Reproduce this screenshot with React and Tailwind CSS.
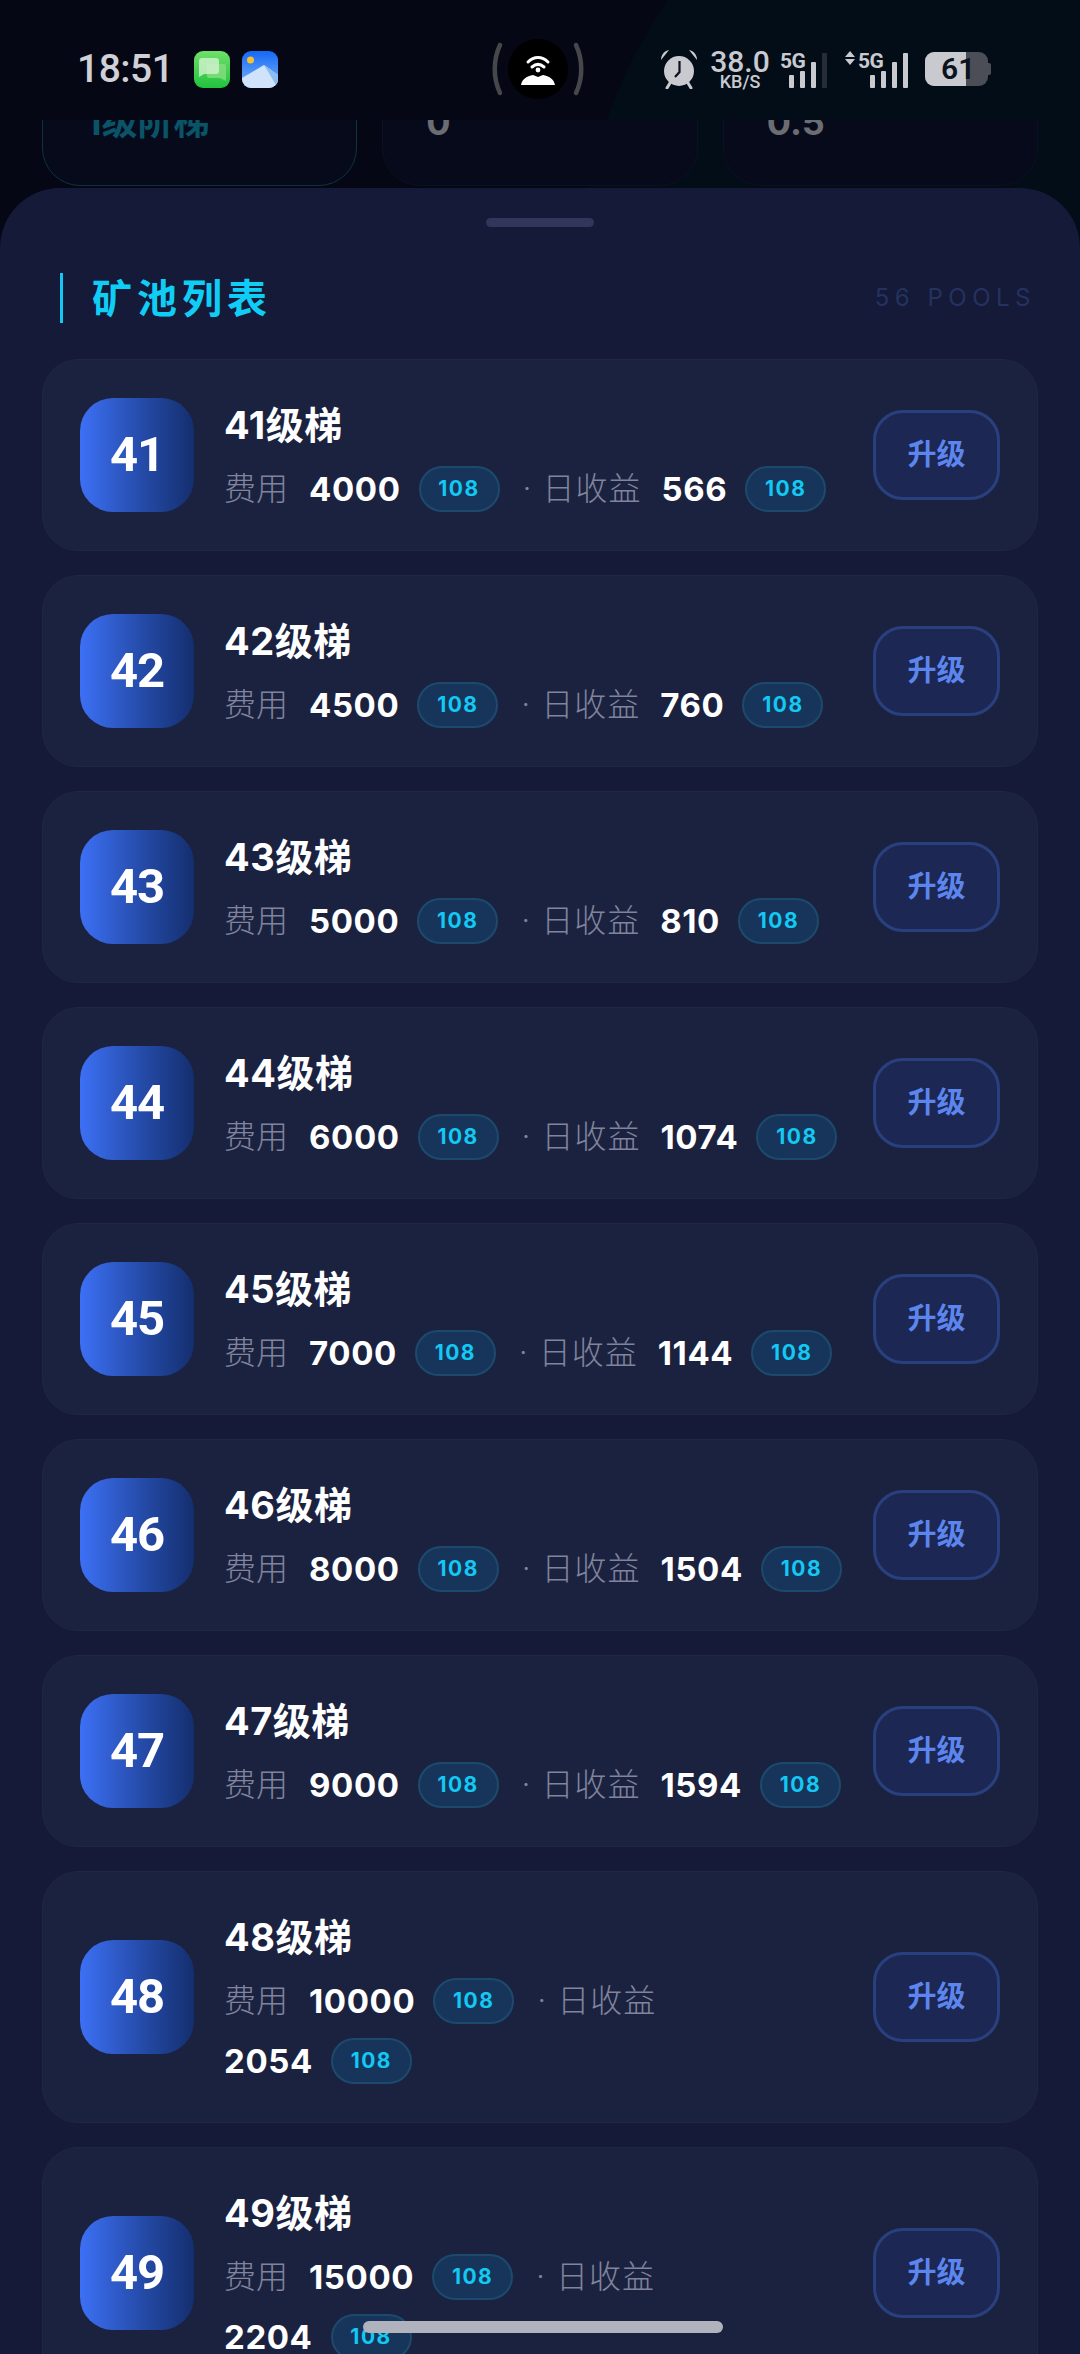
const FONT = { fontFamily: 'Inter, "Noto Sans CJK SC", sans-serif' };

const pools = [
  { level: 41, cost: 4000, daily: 566 },
  { level: 42, cost: 4500, daily: 760 },
  { level: 43, cost: 5000, daily: 810 },
  { level: 44, cost: 6000, daily: 1074 },
  { level: 45, cost: 7000, daily: 1144 },
  { level: 46, cost: 8000, daily: 1504 },
  { level: 47, cost: 9000, daily: 1594 },
  { level: 48, cost: 10000, daily: 2054 },
  { level: 49, cost: 15000, daily: 2204 },
];

function Pill() {
  return (
    <span className="ml-[18px] flex h-[46px] w-[81px] items-center justify-center rounded-full border-2 border-[#1d4a6c] bg-[#17355a] font-['Inter'] text-[21px] font-bold tracking-[1.5px] text-[#13c8f2]">
      108
    </span>
  );
}

function Num({ children }) {
  return <span className="font-['Inter'] text-[33px] font-bold leading-[46px] tracking-[0.6px] text-white">{children}</span>;
}

function PoolRow({ level, cost, daily }) {
  return (
    <div className="flex items-center rounded-[36px] border border-[#1f2745] bg-[#1b2240] p-[37px]">
      <div className="flex h-[114px] w-[114px] shrink-0 items-center justify-center rounded-[33px] bg-gradient-to-r from-[#3c70f5] to-[#142f6f] font-['Roboto'] text-[49px] font-bold tracking-[-1px] text-white">
        {level}
      </div>
      <div className="ml-[30px] mr-[24px] min-w-0 flex-1">
        <div className="h-[56px] text-[38px] font-bold leading-[56px] tracking-[0.5px] text-white">{level}级梯</div>
        <div className="mb-[1px] mt-[13px] flex flex-wrap items-center gap-y-[14px]">
          <div className="flex items-center">
            <span className="mr-[21px] text-[32px] font-light leading-[46px] tracking-[0px] text-[#80849c]">费用</span>
            <Num>{cost}</Num>
            <Pill />
          </div>
          <div className="flex items-center">
            <span className="ml-[24px] mr-[12px] text-[24px] leading-[46px] text-[#80849c]">·</span>
            <span className="mr-[20px] text-[32px] font-light leading-[46px] tracking-[1px] text-[#80849c]">日收益</span>
          </div>
          <div className="flex items-center">
            <Num>{daily}</Num>
            <Pill />
          </div>
        </div>
      </div>
      <button className="flex h-[90px] w-[127px] shrink-0 items-center justify-center rounded-[30px] border-[3px] border-[#29407f] bg-[#1c2753] text-[29px] font-bold text-[#5c86ee]">
        升级
      </button>
    </div>
  );
}

function MessageIcon() {
  return (
    <svg width="36" height="37" viewBox="0 0 36 37">
      <defs>
        <linearGradient id="msg" x1="0" y1="0" x2="0" y2="1">
          <stop offset="0" stopColor="#6fe06a" />
          <stop offset="1" stopColor="#22c13f" />
        </linearGradient>
      </defs>
      <rect width="36" height="37" rx="9" fill="url(#msg)" />
      <path d="M13 13h17a2 2 0 0 1 2 2v15l-6-3H15a2 2 0 0 1-2-2z" fill="#86dd80" opacity="0.8" />
      <path d="M8 7h14a3 3 0 0 1 3 3v10a3 3 0 0 1-3 3H10l-5 3V10a3 3 0 0 1 3-3z" fill="#d3f2ce" opacity="0.8" />
    </svg>
  );
}

function GalleryIcon() {
  return (
    <svg width="36" height="37" viewBox="0 0 36 37">
      <defs>
        <linearGradient id="sky" x1="0" y1="0" x2="0" y2="1">
          <stop offset="0" stopColor="#1668f5" />
          <stop offset="1" stopColor="#7cb6f8" />
        </linearGradient>
      </defs>
      <rect width="36" height="37" rx="9" fill="url(#sky)" />
      <circle cx="8.5" cy="9" r="3.5" fill="#f6c32c" />
      <path d="M0 27 L22 14 L36 24 V28 a9 9 0 0 1 -9 9 H9 a9 9 0 0 1 -9 -9z" fill="#cfe4fb" />
      <path d="M22 14 L36 24 V28 a9 9 0 0 1 -2 6z" fill="#8fbdf0" />
    </svg>
  );
}

function HotspotPill() {
  return (
    <div className="flex items-center gap-[5px]">
      <svg width="12" height="54" viewBox="0 0 12 54" fill="none">
        <path d="M9 3C2 18 2 36 9 51" stroke="#46474b" strokeWidth="4.5" strokeLinecap="round" />
      </svg>
      <div className="flex h-[60px] w-[60px] items-center justify-center rounded-full bg-black">
        <svg width="36" height="34" viewBox="0 0 36 34" fill="none">
          <path d="M8 10c6-6 14-6 20 0" stroke="#fff" strokeWidth="3" strokeLinecap="round" />
          <path d="M12 15c4-3.5 8-3.5 12 0" stroke="#fff" strokeWidth="3" strokeLinecap="round" />
          <circle cx="18" cy="18" r="2.4" fill="#fff" />
          <path d="M13 23l5 2 5-2c6 1 11 4 12 10H1c1-6 6-9 12-10z" fill="#fff" />
        </svg>
      </div>
      <svg width="12" height="54" viewBox="0 0 12 54" fill="none">
        <path d="M3 3C10 18 10 36 3 51" stroke="#46474b" strokeWidth="4.5" strokeLinecap="round" />
      </svg>
    </div>
  );
}

function AlarmIcon() {
  return (
    <svg width="38" height="40" viewBox="0 0 38 40" fill="none">
      <circle cx="19" cy="22" r="15" fill="#c9cacf" />
      <path d="M1 11C1 6 4 2 9 1z" fill="#c9cacf" />
      <path d="M37 11c0-5-3-9-8-10z" fill="#c9cacf" />
      <path d="M10 34l-3 5M28 34l3 5" stroke="#c9cacf" strokeWidth="3" strokeLinecap="round" />
      <path d="M19.5 12v11l-4.5 5" stroke="#0a1220" strokeWidth="2.2" />
    </svg>
  );
}

function Bars({ lastDim }) {
  const heights = [13, 17, 26, 35];
  return (
    <div className="flex items-end gap-[6px]">
      {heights.map((h, i) => (
        <span
          key={i}
          className={`w-[5px] rounded-[1px] ${lastDim && i === 3 ? 'bg-[#262d38]' : 'bg-[#c9cacf]'}`}
          style={{ height: h }}
        />
      ))}
    </div>
  );
}

function StatusBar() {
  return (
    <div className="relative z-10 flex h-[120px] shrink-0 items-center pt-[18px]">
      <span className="ml-[77px] w-[92px] font-['Roboto'] text-[39px] font-medium leading-none tracking-[-0.5px] text-[#d0d1d6]">18:51</span>
      <div className="ml-[25px] flex items-center gap-[12px]">
        <MessageIcon />
        <GalleryIcon />
      </div>
      <div className="ml-[213px]">
        <HotspotPill />
      </div>
      <div className="ml-[75px] flex items-center">
        <AlarmIcon />
        <div className="ml-[13px] flex w-[58px] flex-col items-center text-[#c9cacf]">
          <span className="font-['Roboto'] text-[30px] font-medium leading-[24px]">38.0</span>
          <span className="font-['Roboto'] text-[18px] font-medium leading-[15px]">KB/S</span>
        </div>
        <div className="relative ml-[11px] h-[37px] w-[49px]">
          <span className="absolute left-0 top-0 font-['Roboto'] text-[21px] font-bold leading-[20px] tracking-[-0.5px] text-[#c9cacf]">5G</span>
          <div className="absolute bottom-0 right-[2px]"><Bars lastDim /></div>
        </div>
        <div className="relative ml-[16px] h-[37px] w-[63px]">
          <svg className="absolute left-0 top-0" width="10" height="14" viewBox="0 0 10 14">
            <path d="M5 0l5 6H0zM5 14l5-6H0z" fill="#c9cacf" />
          </svg>
          <span className="absolute left-[13px] top-0 font-['Roboto'] text-[21px] font-bold leading-[20px] tracking-[-0.5px] text-[#c9cacf]">5G</span>
          <div className="absolute bottom-0 right-0"><Bars /></div>
        </div>
        <div className="relative ml-[17px] flex h-[34px] w-[63px] items-center overflow-hidden rounded-[9px] bg-[#4b4e56]">
          <div className="h-full w-[41px] bg-[#c9cacf]" />
          <span className="absolute left-[16px] top-0 font-['Roboto'] text-[30px] font-semibold leading-[34px] text-[#0b1220]">61</span>
        </div>
        <div className="h-[12px] w-[3px] rounded-r-[2px] bg-[#4b4e56]" />
      </div>
    </div>
  );
}

function StatCard({ value, active }) {
  return (
    <div className={`h-[186px] flex-1 rounded-[38px] border bg-[#070a1a] pl-[43px] pt-[99px] ${active ? 'border-[#10323f]' : 'border-[#0b1122]'}`}>
      <span className={`text-[36px] font-bold leading-[44px] ${active ? 'text-[#0a5468]' : 'text-[#6c6d72]'}`}>{value}</span>
    </div>
  );
}

export default function App() {
  return (
    <div className="relative flex h-screen w-full flex-col overflow-hidden bg-[#050814]" style={FONT}>
      <div className="absolute left-[582px] top-[-198px] h-[936px] w-[936px] rounded-full bg-[#030d18]" />
      <StatusBar />
      <div className="relative h-[68px] shrink-0 overflow-hidden">
        <div className="absolute left-[42px] right-[42px] top-[-120px] flex gap-[25px]">
          <StatCard value="1级阶梯" active />
          <StatCard value="0" />
          <StatCard value="0.5" />
        </div>
      </div>
      <div className="relative min-h-0 flex-1 rounded-t-[60px] bg-[#141a38] px-[42px]">
        <div className="mx-auto mt-[30px] h-[9px] w-[108px] rounded-full bg-[#31365a]" />
        <div className="mt-[46px] flex h-[50px] items-center justify-between pl-[18px] pr-[2px]">
          <div className="flex h-full items-center border-l-[3px] border-[#13c8f2] pl-[29px]">
            <span className="translate-y-[1px] text-[40px] font-bold tracking-[5px] text-[#10cdf5]">矿池列表</span>
          </div>
          <span className="text-[24px] font-normal tracking-[5.5px] text-[#24325f]">56 POOLS</span>
        </div>
        <div className="mt-[36px] flex flex-col gap-[24px]">
          {pools.map((p) => (
            <PoolRow key={p.level} {...p} />
          ))}
        </div>
      </div>
      <div className="absolute left-[363px] top-[2321px] h-[12px] w-[360px] rounded-full bg-[#b0b2bd]" />
    </div>
  );
}
